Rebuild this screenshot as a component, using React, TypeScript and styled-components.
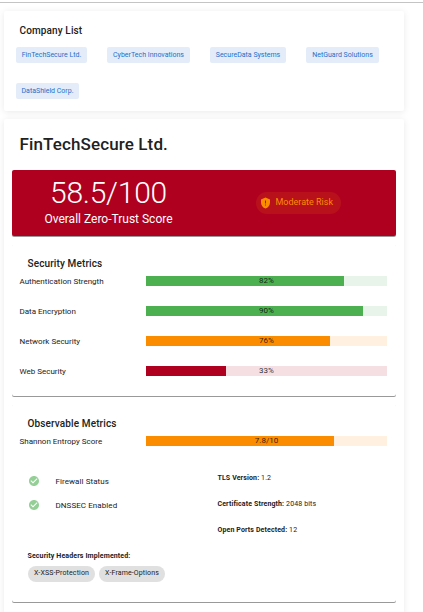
import React from "react";
import styled, { createGlobalStyle } from "styled-components";

const GlobalStyle = createGlobalStyle`
  *, *::before, *::after { box-sizing: border-box; }
  body {
    margin: 0;
    background: #fff;
    color: #212121;
    font-family: Roboto, "Liberation Sans", sans-serif;
    overflow: hidden;
  }
`;

const Page = styled.main`
  height: 612px;
  overflow: hidden;
  padding-top: 2px;
`;

const TopRule = styled.div`
  height: 1px;
  background: #c4c4c4;
`;

const Stack = styled.div`
  display: flex;
  flex-direction: column;
  gap: 8px;
  width: 400px;
  margin: 8px 0 0 4px;
`;

const Card = styled.section<{ $height: number }>`
  height: ${(p) => p.$height}px;
  background: #fff;
  border-radius: 2px;
  box-shadow: 0 1px 7px rgba(0, 0, 0, 0.09);
`;

const ListTitle = styled.h2`
  margin: 0;
  padding: 12px 0 0 15.5px;
  font-size: 10px;
  font-weight: 500;
  line-height: 16px;
  letter-spacing: 0.0125em;
`;

const CompanyChips = styled.div`
  display: flex;
  flex-wrap: wrap;
  gap: 20px;
  padding: 8px 12px;
`;

const CompanyChip = styled.button<{ $width: number }>`
  width: ${(p) => p.$width}px;
  height: 16px;
  padding: 0;
  border: 0;
  border-radius: 2px;
  background: #e3ecf8;
  color: #1f70ca;
  font: 400 7px/16px Roboto, sans-serif;
  text-align: center;
  white-space: nowrap;
`;

const CompanyName = styled.h1`
  margin: 0;
  padding: 15px 0 0 15.5px;
  font-size: 17px;
  font-weight: 500;
  line-height: 20px;
  letter-spacing: 0.0073em;
`;

const Banner = styled.div`
  display: grid;
  grid-template-columns: 1fr 1fr;
  height: 66px;
  margin: 16px 8px 0;
  border-radius: 2px;
  background: #b00020;
  box-shadow: 0 1px 0 #999;
  color: #fff;
`;

const Score = styled.div`
  padding: 6px 0 0 1px;
  text-align: center;
`;

const ScoreValue = styled.div`
  font-size: 30px;
  font-weight: 300;
  line-height: 34px;
  letter-spacing: -0.0083em;
`;

const ScoreLabel = styled.div`
  font-size: 12px;
  line-height: 16px;
  padding-top: 1px;
`;

const RiskCell = styled.div`
  display: flex;
  align-items: center;
  padding: 0 0 1px 52px;
`;

const RiskChip = styled.div`
  display: flex;
  align-items: center;
  gap: 4.5px;
  width: 85px;
  height: 22px;
  margin-top: 1px;
  padding-left: 4px;
  border-radius: 11px;
  background: #b8111c;
  color: #fb8c00;
  font-size: 9px;
  line-height: 20px;
  white-space: nowrap;
`;

const RiskText = styled.span`
  height: 22px;
`;

const Panel = styled.section<{ $height: number; $top: number }>`
  height: ${(p) => p.$height}px;
  margin: ${(p) => p.$top}px 8px 0;
  border-radius: 2px;
  box-shadow: 0 1px 0 #999;
  background: #fff;
`;

const PanelTitle = styled.h3`
  margin: 0;
  padding: 13px 0 0 15.5px;
  font-size: 10px;
  font-weight: 500;
  line-height: 14px;
  letter-spacing: 0.0125em;
`;

const MetricRow = styled.div`
  display: grid;
  grid-template-columns: 126.5px 241px;
  align-items: start;
  height: 30px;
  padding: 5px 0 0 7.5px;
`;

const MetricLabel = styled.span`
  font-size: 8px;
  line-height: 11px;
`;

const Track = styled.div<{ $tint: string }>`
  display: grid;
  height: 10px;
  background: ${(p) => p.$tint};
`;

const Fill = styled.div<{ $color: string; $value: number }>`
  grid-area: 1 / 1;
  width: ${(p) => p.$value}%;
  background: ${(p) => p.$color};
`;

const TrackText = styled.span`
  grid-area: 1 / 1;
  color: rgba(0, 0, 0, 0.8);
  font-size: 8px;
  line-height: 9px;
  text-align: center;
`;

const Details = styled.div`
  display: grid;
  grid-template-columns: 190px 1fr;
  padding: 8px 0 0 15.5px;
`;

const StatusList = styled.div`
  display: flex;
  flex-direction: column;
`;

const Status = styled.div`
  display: flex;
  align-items: center;
  gap: 16px;
  height: 24px;
  font-size: 8px;
  letter-spacing: 0.009em;
`;

const FactList = styled.div`
  display: flex;
  flex-direction: column;
`;

const Fact = styled.p`
  margin: 0;
  height: 26px;
  font-size: 7px;
  line-height: 19px;
  letter-spacing: 0.0178em;
`;

const HeadersTitle = styled.h4`
  margin: 0;
  padding: 4px 0 0 15.5px;
  font-size: 7px;
  font-weight: 700;
  line-height: 10px;
  letter-spacing: 0.0178em;
`;

const HeaderChips = styled.div`
  display: flex;
  gap: 4px;
  padding: 5px 0 0 16px;
`;

const HeaderChip = styled.span<{ $width: number }>`
  width: ${(p) => p.$width}px;
  height: 16px;
  border-radius: 8px;
  background: #e0e0e0;
  font-size: 7px;
  line-height: 14px;
  letter-spacing: 0.0178em;
  text-align: center;
`;

const companies = [
  { name: "FinTechSecure Ltd.", width: 71 },
  { name: "CyberTech Innovations", width: 83 },
  { name: "SecureData Systems", width: 76 },
  { name: "NetGuard Solutions", width: 73 },
  { name: "DataShield Corp.", width: 63 },
];

const green = { color: "#4caf50", tint: "#e8f4e9" };
const orange = { color: "#fb8c00", tint: "#fff0df" };
const red = { color: "#b00020", tint: "#f5dfe2" };

const metrics = [
  { label: "Authentication Strength", value: 82.1, tone: green },
  { label: "Data Encryption", value: 90.1, tone: green },
  { label: "Network Security", value: 76.4, tone: orange },
  { label: "Web Security", value: 33.2, tone: red },
];

type MetricProps = {
  label: string;
  value: number;
  text: string;
  tone: { color: string; tint: string };
};

function Metric({ label, value, text, tone }: MetricProps) {
  return (
    <MetricRow>
      <MetricLabel>{label}</MetricLabel>
      <Track $tint={tone.tint}>
        <Fill $color={tone.color} $value={value} />
        <TrackText>{text}</TrackText>
      </Track>
    </MetricRow>
  );
}

function ShieldAlert() {
  return (
    <svg width="11" height="12" viewBox="1 0 22 24" fill="#fb8c00">
      <path d="M12,1L3,5V11C3,16.55 6.84,21.74 12,23C17.16,21.74 21,16.55 21,11V5M11,7H13V13H11M11,15H13V17H11" fillRule="evenodd" />
    </svg>
  );
}

function CheckCircle() {
  return (
    <svg width="12" height="12" viewBox="0 0 24 24" fill="#94cf96">
      <path d="M12 2C6.5 2 2 6.5 2 12S6.5 22 12 22 22 17.5 22 12 17.5 2 12 2M10 17L5 12L6.41 10.59L10 14.17L17.59 6.58L19 8L10 17Z" />
    </svg>
  );
}

export default function App() {
  return (
    <>
      <GlobalStyle />
      <Page>
        <TopRule />
        <Stack>
          <Card $height={100}>
            <ListTitle>Company List</ListTitle>
            <CompanyChips>
              {companies.map((c) => (
                <CompanyChip key={c.name} $width={c.width}>{c.name}</CompanyChip>
              ))}
            </CompanyChips>
          </Card>
          <Card $height={520}>
            <CompanyName>FinTechSecure Ltd.</CompanyName>
            <Banner>
              <Score>
                <ScoreValue>58.5/100</ScoreValue>
                <ScoreLabel>Overall Zero-Trust Score</ScoreLabel>
              </Score>
              <RiskCell>
                <RiskChip>
                  <ShieldAlert />
                  <RiskText>Moderate Risk</RiskText>
                </RiskChip>
              </RiskCell>
            </Banner>
            <Panel $height={152} $top={8}>
              <PanelTitle>Security Metrics</PanelTitle>
              {metrics.map((m) => (
                <Metric key={m.label} label={m.label} value={m.value} text={`${Math.floor(m.value)}%`} tone={m.tone} />
              ))}
            </Panel>
            <Panel $height={198} $top={8}>
              <PanelTitle>Observable Metrics</PanelTitle>
              <Metric label="Shannon Entropy Score" value={78} text="7.8/10" tone={orange} />
              <Details>
                <StatusList>
                  <Status><CheckCircle />Firewall Status</Status>
                  <Status><CheckCircle />DNSSEC Enabled</Status>
                </StatusList>
                <FactList>
                  <Fact><b>TLS Version:</b> 1.2</Fact>
                  <Fact><b>Certificate Strength:</b> 2048 bits</Fact>
                  <Fact><b>Open Ports Detected:</b> 12</Fact>
                </FactList>
              </Details>
              <HeadersTitle>Security Headers Implemented:</HeadersTitle>
              <HeaderChips>
                <HeaderChip $width={67}>X-XSS-Protection</HeaderChip>
                <HeaderChip $width={66}>X-Frame-Options</HeaderChip>
              </HeaderChips>
            </Panel>
          </Card>
        </Stack>
      </Page>
    </>
  );
}
